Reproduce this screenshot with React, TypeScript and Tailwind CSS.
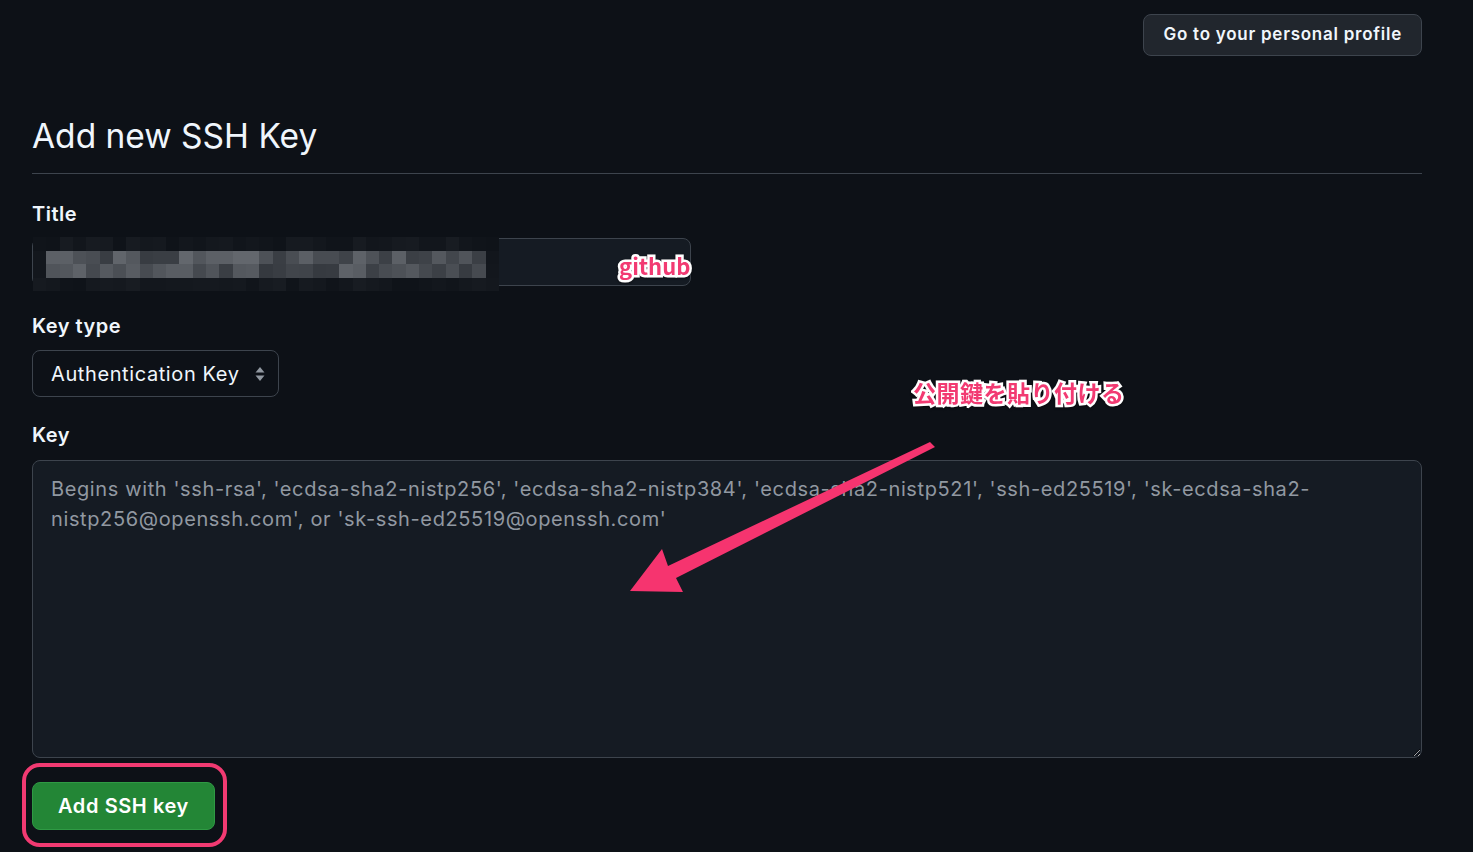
import React from "react";

// redaction mosaic over the title input
const mosaicRows = [
  { dark: true, seed: 3 },
  { dark: false, seed: 7 },
  { dark: false, seed: 11 },
  { dark: true, seed: 5 },
];

const shade = (row: number, col: number, dark: boolean, seed: number) => {
  const n = Math.abs(Math.sin(col * 12.9898 + row * 78.233 + seed) * 43758.5453) % 1;
  if (dark || col < 1 || col > 33) {
    const v = 14 + Math.round(n * 10);
    return `rgb(${v},${v + 4},${v + 10})`;
  }
  const v = 52 + Math.round(n * 48);
  return `rgb(${v},${v + 4},${v + 10})`;
};

const Mosaic = () => (
  <div className="absolute left-0 top-[-2px] w-[466px] h-[54px] flex flex-col">
    {mosaicRows.map((r, ri) => (
      <div key={ri} className="flex flex-1">
        {Array.from({ length: 35 }).map((_, ci) => (
          <div key={ci} className="flex-1" style={{ background: shade(ri, ci, r.dark, r.seed) }} />
        ))}
      </div>
    ))}
  </div>
);

const annot =
  "font-bold text-[#f23a72] [paint-order:stroke_fill] [-webkit-text-stroke:5px_white] [font-family:'Noto_Sans_CJK_JP','Noto_Sans',sans-serif] drop-shadow-[0_1px_1px_rgba(0,0,0,0.5)]";

export default function App() {
  return (
    <div className="relative min-h-[852px] bg-[#0d1117] text-[#f0f6fc] [font-family:Inter,'Noto_Sans',sans-serif] pl-8 pr-[51px] pt-[14px] overflow-hidden">
      <div className="flex justify-end">
        <button className="h-[42px] px-[19px] rounded-lg bg-[#21262d] border border-[#3d444d] text-[17px] font-semibold tracking-[0.75px]">
          Go to your personal profile
        </button>
      </div>

      <h1 className="mt-[56px] pb-[13px] text-[33.5px] leading-[48px] font-normal border-b border-[#3d444d]">
        Add new SSH Key
      </h1>

      <form className="flex flex-col tracking-[0.5px]">
        <label className="mt-[26px] text-[20px] leading-[28px] font-semibold">Title</label>
        <div className="relative mt-[10px] w-[659px] h-[48px] rounded-lg border border-[#3d444d] bg-[#151b23]">
          <Mosaic />
          <span className={`absolute left-[586px] top-[12px] text-[22px] leading-[28px] tracking-normal ${annot}`}>github</span>
        </div>

        <label className="mt-[26px] text-[20px] leading-[28px] font-semibold">Key type</label>
        <div className="mt-[10px] w-[247px] h-[47px] rounded-lg border border-[#3d444d] bg-[#0d1117] flex items-center pl-[18px] pr-[12px] justify-between">
          <span className="text-[20px] tracking-[0.6px]">Authentication Key</span>
          <svg width="12" height="18" viewBox="0 0 12 18" fill="#9198a1">
            <path d="M6 2 L10.5 7.5 H1.5 Z" />
            <path d="M6 16 L10.5 10.5 H1.5 Z" />
          </svg>
        </div>

        <label className="mt-[24px] text-[20px] leading-[28px] font-semibold">Key</label>
        <textarea
          className="mt-[11px] w-full h-[298px] rounded-lg border border-[#3d444d] bg-[#151b23] px-[18px] py-[13px] text-[20px] leading-[30px] tracking-[0.62px] placeholder:text-[#9198a1] outline-none resize-y"
          placeholder="Begins with 'ssh-rsa', 'ecdsa-sha2-nistp256', 'ecdsa-sha2-nistp384', 'ecdsa-sha2-nistp521', 'ssh-ed25519', 'sk-ecdsa-sha2-nistp256@openssh.com', or 'sk-ssh-ed25519@openssh.com'"
        />

        <div className="relative mt-[24px] self-start">
          <div className="absolute -left-[10px] -top-[19px] -right-[12px] -bottom-[17px] rounded-[18px] border-[4px] border-[#f23a72]" />
          <button
            type="button"
            className="relative h-[48px] w-[183px] rounded-lg bg-[#238636] border border-[#2f9a44] text-white text-[20px] font-semibold tracking-[0.6px]"
          >
            Add SSH key
          </button>
        </div>
      </form>

      <span className={`absolute left-[913px] top-[376px] text-[23px] leading-[32px] tracking-[0.5px] ${annot}`}>
        公開鍵を貼り付ける
      </span>

      <svg className="absolute left-0 top-0 pointer-events-none" width="1473" height="852">
        <polygon
          points="930,442 935,447 676,578 683,592 630,591 662,549 668,566"
          fill="#f6346f"
        />
      </svg>
    </div>
  );
}
